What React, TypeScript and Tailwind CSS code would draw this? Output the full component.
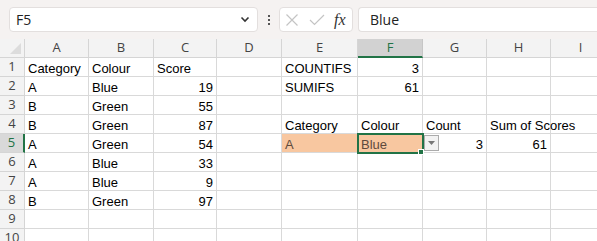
import React from "react";

const cols = [
  { name: "A", w: 64 },
  { name: "B", w: 65 },
  { name: "C", w: 63 },
  { name: "D", w: 65 },
  { name: "E", w: 76 },
  { name: "F", w: 65 },
  { name: "G", w: 64 },
  { name: "H", w: 64 },
  { name: "I", w: 60 },
];

type Cell = { v: string; right?: boolean; fill?: boolean };

// sheet data, keyed by row then column letter
const data: Record<number, Record<string, Cell>> = {
  1: {
    A: { v: "Category" },
    B: { v: "Colour" },
    C: { v: "Score" },
    E: { v: "COUNTIFS" },
    F: { v: "3", right: true },
  },
  2: {
    A: { v: "A" },
    B: { v: "Blue" },
    C: { v: "19", right: true },
    E: { v: "SUMIFS" },
    F: { v: "61", right: true },
  },
  3: { A: { v: "B" }, B: { v: "Green" }, C: { v: "55", right: true } },
  4: {
    A: { v: "B" },
    B: { v: "Green" },
    C: { v: "87", right: true },
    E: { v: "Category" },
    F: { v: "Colour" },
    G: { v: "Count" },
    H: { v: "Sum of Scores" },
  },
  5: {
    A: { v: "A" },
    B: { v: "Green" },
    C: { v: "54", right: true },
    E: { v: "A", fill: true },
    F: { v: "Blue", fill: true },
    G: { v: "3", right: true },
    H: { v: "61", right: true },
  },
  6: { A: { v: "A" }, B: { v: "Blue" }, C: { v: "33", right: true } },
  7: { A: { v: "A" }, B: { v: "Blue" }, C: { v: "9", right: true } },
  8: { A: { v: "B" }, B: { v: "Green" }, C: { v: "97", right: true } },
};

const rows = [1, 2, 3, 4, 5, 6, 7, 8, 9, 10];

const cellFont = { fontFamily: '"Liberation Sans", Arial, sans-serif' };
const uiFont = { fontFamily: '"Open Sans", "Noto Sans", sans-serif' };

function FormulaBar() {
  return (
    <div className="flex h-[39px] items-center bg-[#f5f2f1] pl-[9px]" style={uiFont}>
      <div className="flex h-[25px] w-[249px] items-center justify-between rounded-[4px] border border-[#e3dfde] bg-white pl-[6px] pr-[7px] text-[14px] text-[#222]">
        <span>F5</span>
        <svg width="10" height="7" viewBox="0 0 10 7">
          <path d="M1.5 1.5 L5 5 L8.5 1.5" fill="none" stroke="#333" strokeWidth="1.6" />
        </svg>
      </div>
      <div className="flex w-[21px] flex-col items-center gap-[2px]">
        <div className="h-[2px] w-[2px] bg-[#555]" />
        <div className="h-[2px] w-[2px] bg-[#555]" />
        <div className="h-[2px] w-[2px] bg-[#555]" />
      </div>
      <div className="flex h-[25px] w-[74px] items-center rounded-[4px] border border-[#e3dfde] bg-white pl-[5px]">
        <svg width="14" height="14" viewBox="0 0 14 14">
          <path d="M1.5 1.5 L12.5 12.5 M12.5 1.5 L1.5 12.5" stroke="#c4c4c4" strokeWidth="1.2" />
        </svg>
        <svg className="ml-[10px]" width="16" height="14" viewBox="0 0 16 14">
          <path d="M1 7 L5.5 11.5 L15 2" fill="none" stroke="#c4c4c4" strokeWidth="1.2" />
        </svg>
        <span
          className="ml-[9px] text-[16px] italic leading-none text-[#333]"
          style={{ fontFamily: '"Liberation Serif", serif' }}
        >
          fx
        </span>
      </div>
      <div className="ml-[5px] flex h-[25px] flex-1 items-center rounded-l-[4px] border border-r-0 border-[#e3dfde] bg-white pl-[11px] text-[14px] text-[#222]">
        Blue
      </div>
    </div>
  );
}

function HeaderRow() {
  return (
    <div className="flex h-[19px] bg-[#f3f3f3]" style={uiFont}>
      <div className="relative w-[25px] shrink-0 border-r border-b border-[#d5d5d5]">
        <svg className="absolute bottom-[3px] right-[3px]" width="11" height="11" viewBox="0 0 11 11">
          <path d="M11 0 L11 11 L0 11 Z" fill="#dcdcdc" />
        </svg>
      </div>
      {cols.map((c) => {
        const sel = c.name === "F";
        return (
          <div
            key={c.name}
            className={
              sel
                ? "flex shrink-0 items-center justify-center border-r border-b-2 border-r-[#c6c6c6] border-b-[#217346] bg-[#d2d2d2] text-[13px] text-[#217346]"
                : "flex shrink-0 items-center justify-center border-r border-b border-[#d5d5d5] text-[13px] text-[#444]"
            }
            style={{ width: c.w }}
          >
            {c.name}
          </div>
        );
      })}
    </div>
  );
}

function SheetRow({ r }: { r: number }) {
  const row = data[r] || {};
  const sel = r === 5;
  return (
    <div className="flex h-[19px]">
      <div
        className={
          sel
            ? "flex w-[25px] shrink-0 items-center justify-center border-r-2 border-b border-r-[#217346] border-b-[#d5d5d5] bg-[#d9d9d9] text-[13px] text-[#217346]"
            : "flex w-[25px] shrink-0 items-center justify-center border-r border-b border-[#d5d5d5] bg-[#f3f3f3] text-[13px] text-[#444]"
        }
        style={uiFont}
      >
        {r}
      </div>
      {cols.map((c) => {
        const cell = row[c.name];
        const active = sel && c.name === "F";
        return (
          <div
            key={c.name}
            className={
              "relative flex shrink-0 items-center overflow-visible border-r border-b border-[#d9d9d9] px-[3px] text-[13px] leading-none " +
              (cell?.right ? "justify-end " : "") +
              (cell?.fill ? "bg-[#f8c7a0] text-[#5e4a3d] " : "text-black ")
            }
            style={{ width: c.w, ...cellFont }}
          >
            <span className="relative z-10 whitespace-nowrap pt-[2px]">{cell?.v}</span>
            {active && (
              <>
                <div className="pointer-events-none absolute -left-[1px] -top-[1px] z-20 h-[21px] w-[67px] border-2 border-[#217346]" />
                <div className="absolute -bottom-[3px] -right-[2px] z-20 h-[6px] w-[6px] border border-white bg-[#217346]" />
              </>
            )}
            {sel && c.name === "G" && (
              <div className="absolute left-[1px] top-[1px] z-10 flex h-[16px] w-[15px] items-center justify-center border border-[#ababab] bg-[#f2f2f2]">
                <svg width="7" height="4" viewBox="0 0 7 4">
                  <path d="M0 0 L7 0 L3.5 4 Z" fill="#777" />
                </svg>
              </div>
            )}
          </div>
        );
      })}
    </div>
  );
}

export default function App() {
  return (
    <div className="h-[241px] w-[597px] overflow-hidden bg-white">
      <FormulaBar />
      <HeaderRow />
      {rows.map((r) => (
        <SheetRow key={r} r={r} />
      ))}
    </div>
  );
}
